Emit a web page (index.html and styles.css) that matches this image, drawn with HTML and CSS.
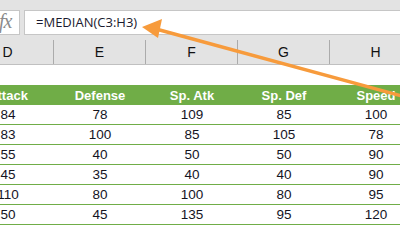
FILE: index.html
```html
<!DOCTYPE html>
<html>
<head>
<meta charset="utf-8">
<link rel="stylesheet" href="styles.css">
</head>
<body>
<div class="page">
  <div class="formula-bar">
    <div class="fx-box"><span class="fx">fx</span></div>
    <div class="formula-input">=MEDIAN(C3:H3)</div>
  </div>
  <div class="sheet">
    <div class="col-headers">
      <div class="ch">D</div><div class="ch">E</div><div class="ch">F</div><div class="ch">G</div><div class="ch">H</div>
    </div>
    <div class="blank-row"></div>
    <div class="grid">
      <div class="th">Attack</div><div class="th">Defense</div><div class="th">Sp. Atk</div><div class="th">Sp. Def</div><div class="th">Speed</div>
      <div class="td">84</div><div class="td">78</div><div class="td">109</div><div class="td">85</div><div class="td">100</div>
      <div class="td">83</div><div class="td">100</div><div class="td">85</div><div class="td">105</div><div class="td">78</div>
      <div class="td">55</div><div class="td">40</div><div class="td">50</div><div class="td">50</div><div class="td">90</div>
      <div class="td">45</div><div class="td">35</div><div class="td">40</div><div class="td">40</div><div class="td">90</div>
      <div class="td">110</div><div class="td">80</div><div class="td">100</div><div class="td">80</div><div class="td">95</div>
      <div class="td">50</div><div class="td">45</div><div class="td">135</div><div class="td">95</div><div class="td">120</div>
    </div>
  </div>
  <svg class="arrow" width="400" height="245" viewBox="0 0 400 245">
    <line x1="156" y1="29" x2="402" y2="96" stroke="#f79b3c" stroke-width="3.5"/>
    <polygon points="142,27 162,19 158,38" fill="#f79b3c"/>
  </svg>
</div>
</body>
</html>
```

FILE: styles.css
```css
html, body {
  margin: 0;
  padding: 0;
  background: #ffffff;
}
.page {
  position: relative;
  width: 400px;
  height: 245px;
  overflow: hidden;
  font-family: "Liberation Sans", Arial, sans-serif;
}
.formula-bar {
  display: flex;
  gap: 4px;
  background: #e3e3e3;
  padding: 10px 0 1px 0;
  height: 25px;
}
.fx-box {
  width: 20px;
  height: 25px;
  box-sizing: border-box;
  background: #ffffff;
  border: 1px solid #c6c6c6;
  border-left: none;
  overflow: hidden;
  display: flex;
  align-items: center;
}
.fx {
  font-family: "Liberation Serif", serif;
  font-style: italic;
  font-size: 20px;
  color: #8c8c8c;
  margin-left: -1px;
  margin-top: -3px;
  letter-spacing: -1px;
}
.formula-input {
  flex: 1;
  height: 25px;
  box-sizing: border-box;
  background: #ffffff;
  border: 1px solid #c6c6c6;
  border-right: none;
  padding-left: 11px;
  font-family: "Open Sans", sans-serif;
  font-size: 13px;
  line-height: 23px;
  color: #1a1a2e;
}
.sheet {
  margin-left: -38px;
  width: 460px;
}
.col-headers {
  display: grid;
  grid-template-columns: repeat(5, 92px);
  height: 28px;
  background: #e3e3e3;
  border-bottom: 1px solid #c0c0c0;
}
.ch {
  border-right: 1px solid #ababab;
  margin-top: 4px;
  text-align: center;
  font-size: 14px;
  line-height: 24px;
  color: #111;
}
.blank-row {
  height: 20px;
}
.grid {
  display: grid;
  grid-template-columns: repeat(5, 92px);
}
.th {
  background: #70ad47;
  color: #ffffff;
  font-weight: bold;
  text-align: center;
  font-size: 13px;
  height: 20px;
  line-height: 21px;
}
.td {
  text-align: center;
  font-size: 13.5px;
  height: 19px;
  line-height: 20px;
  border-bottom: 1px solid #70ad47;
  color: #14141f;
}
.arrow {
  position: absolute;
  left: 0;
  top: 0;
}
```
